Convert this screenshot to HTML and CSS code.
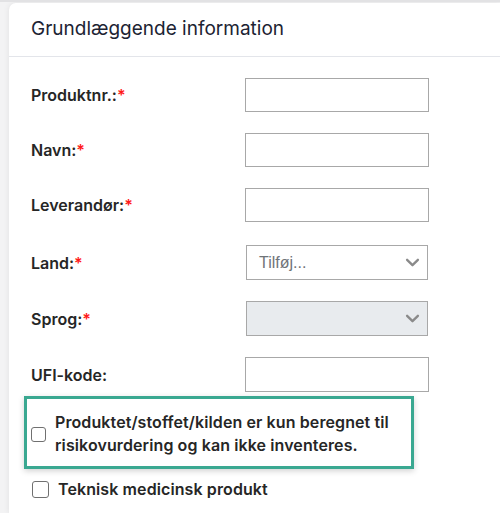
FILE: index.html
```html
<!DOCTYPE html>
<html lang="da">
<head>
<meta charset="utf-8">
<link rel="stylesheet" href="styles.css">
</head>
<body>
<div class="card">
  <div class="card-header">Grundlæggende information</div>
  <div class="card-body">
    <div class="form">
      <div class="row"><label class="lbl">Produktnr.:<span class="req">*</span></label><input class="inp" type="text"></div>
      <div class="row"><label class="lbl">Navn:<span class="req">*</span></label><input class="inp" type="text"></div>
      <div class="row"><label class="lbl">Leverandør:<span class="req">*</span></label><input class="inp" type="text"></div>
      <div class="row row-sel first-sel"><label class="lbl">Land:<span class="req">*</span></label>
        <div class="sel"><span class="ph">Tilføj...</span>
          <svg class="chev" viewBox="0 0 16 10" width="15" height="9"><path d="M2 2l6 6 6-6" fill="none" stroke="#8a8a8a" stroke-width="2.6" stroke-linecap="round" stroke-linejoin="round"/></svg>
        </div>
      </div>
      <div class="row row-sel"><label class="lbl">Sprog:<span class="req">*</span></label>
        <div class="sel sel-disabled">
          <svg class="chev" viewBox="0 0 16 10" width="15" height="9"><path d="M2 2l6 6 6-6" fill="none" stroke="#8a8a8a" stroke-width="2.6" stroke-linecap="round" stroke-linejoin="round"/></svg>
        </div>
      </div>
      <div class="row row-last"><label class="lbl">UFI-kode:</label><input class="inp" type="text"></div>
    </div>
    <div class="highlight">
      <span class="cb cb-small"></span>
      <span class="cb-text">Produktet/stoffet/kilden er kun beregnet til risikovurdering og kan ikke inventeres.</span>
    </div>
    <div class="check-row">
      <span class="cb"></span>
      <span class="cb-text">Teknisk medicinsk produkt</span>
    </div>
  </div>
</div>
</body>
</html>
```
FILE: styles.css
```css
html, body {
  margin: 0;
  padding: 0;
}
body {
  background: #f3f3f4;
  font-family: Inter, "Noto Sans", sans-serif;
  width: 500px;
  height: 513px;
  overflow: hidden;
  border-top: 2px solid #e2e2e4;
  box-sizing: border-box;
}
.card {
  margin: 1px 0 0 9px;
  background: #fff;
  border-radius: 7px 0 0 0;
  box-shadow: 0 0 6px rgba(0,0,0,0.08);
  height: 510px;
  overflow: hidden;
}
.card-header {
  height: 54px;
  box-sizing: border-box;
  padding: 14px 0 0 22px;
  font-size: 19px;
  color: #1c2333;
  border-bottom: 1px solid #e3e5ea;
}
.card-body {
  padding: 21px 0 0 15px;
}
.form {
  display: flex;
  flex-direction: column;
  gap: 21px;
  padding-left: 7px;
}
.row {
  display: flex;
  align-items: center;
  height: 34px;
}
.row-sel {
  height: 35px;
}
.first-sel {
  margin-top: 2px;
}
.row-last {
  height: 35px;
}
.lbl {
  width: 214px;
  font-size: 16px;
  font-weight: 600;
  color: #262626;
}
.req {
  color: #ff1a1a;
}
.inp {
  box-sizing: border-box;
  width: 184px;
  height: 100%;
  margin: 0;
  border: 1px solid #a8a8a8;
  border-radius: 0;
  background: #fff;
  outline: none;
}
.sel {
  box-sizing: border-box;
  width: 182px;
  height: 35px;
  margin-left: 1px;
  border: 1px solid #a8a8a8;
  background: #fff;
  display: flex;
  align-items: center;
  padding: 0 7px 0 12px;
}
.sel-disabled {
  background: #e8ebee;
}
.ph {
  font-family: "Liberation Sans", Arial, sans-serif;
  font-size: 16px;
  color: #6f7479;
}
.chev {
  margin-left: auto;
}
.highlight {
  margin-top: 4px;
  width: 390px;
  box-sizing: border-box;
  border: 3px solid #3aa891;
  box-shadow: 0 2px 6px rgba(0,0,0,0.18);
  display: flex;
  align-items: center;
  padding: 12px 4px 9px 4px;
}
.cb {
  flex: none;
  box-sizing: border-box;
  width: 17px;
  height: 17px;
  border: 1px solid #707070;
  border-radius: 3px;
  background: #fff;
}
.cb-small {
  width: 15px;
  height: 15px;
  margin-right: 9px;
}
.cb-text {
  font-size: 16px;
  font-weight: 600;
  color: #262626;
  line-height: 23px;
  letter-spacing: 0.1px;
}
.check-row {
  display: flex;
  align-items: center;
  margin-top: 9px;
  padding-left: 8px;
}
.check-row .cb {
  margin-right: 9px;
}
```
